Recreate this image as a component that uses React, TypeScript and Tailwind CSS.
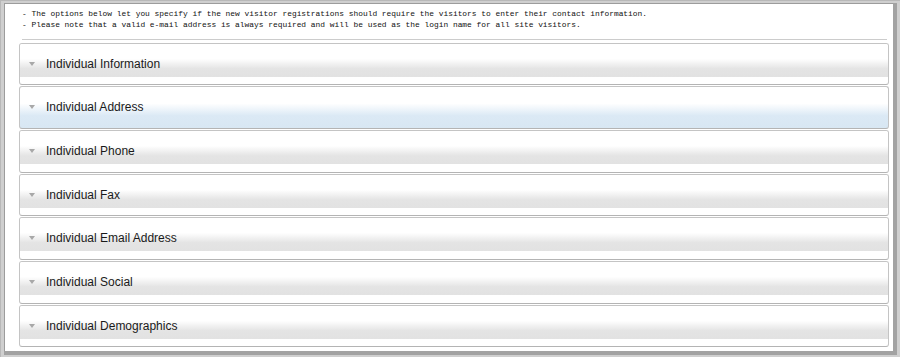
const SECTIONS = [
  'Individual Information',
  'Individual Address',
  'Individual Phone',
  'Individual Fax',
  'Individual Email Address',
  'Individual Social',
  'Individual Demographics',
]

function Panel({ label, active }: { label: string; active?: boolean }) {
  return (
    <div
      className={`h-[42.67px] shrink-0 rounded-[3px] border border-[#c4c4c4] border-b-[#b4b4b4] overflow-hidden flex flex-col ${
        active ? 'bg-[linear-gradient(to_bottom,#ffffff_0%,#ffffff_40%,#dbe9f5_70%,#d8e7f3_100%)]' : 'bg-white'
      }`}
    >
      <div
        className={`h-[33px] shrink-0 pt-[13px] pl-[9px] ${
          active ? '' : 'bg-[linear-gradient(to_bottom,#ffffff_0%,#ffffff_45%,#e4e4e4_75%,#e2e2e2_100%)]'
        }`}
      >
        <div className="flex items-center h-[14px]">
          <svg width="6" height="4" viewBox="0 0 6 4" className="shrink-0">
            <polygon points="0,0 6,0 3,4" fill="#a8a8a8" />
          </svg>
          <span className="ml-[11px] text-[12px] leading-[14px] text-[#1a1a1a] font-['Liberation_Sans',Arial,sans-serif]">
            {label}
          </span>
        </div>
      </div>
    </div>
  )
}

export default function App() {
  return (
    <div className="w-[900px] h-[357px] bg-[#cfcfcf] border-l border-t border-[#b8b8b8] pl-[3px] pt-[2px] pr-[3px] pb-[2px] flex">
      <div className="flex-1 flex bg-[#a2a2a2] pr-[4px] pb-[4px]">
        <div className="flex-1 bg-white border-l border-t border-[#9c9c9c] flex flex-col">
          <div className="pl-[17px] pt-[4px] text-[7.9px] leading-[11.4px] text-[#111] font-['Liberation_Mono','Courier_New',monospace] whitespace-pre">
            <p>- The options below let you specify if the new visitor registrations should require the visitors to enter their contact information.</p>
            <p>- Please note that a valid e-mail address is always required and will be used as the login name for all site visitors.</p>
          </div>
          <div className="ml-[17px] mr-[6px] mt-[8px] h-px bg-[#cccccc]" />
          <div className="mt-[3px] pl-[14px] pr-[4px] flex flex-col gap-px">
            {SECTIONS.map((s, i) => (
              <Panel key={s} label={s} active={i === 1} />
            ))}
          </div>
        </div>
      </div>
    </div>
  )
}
